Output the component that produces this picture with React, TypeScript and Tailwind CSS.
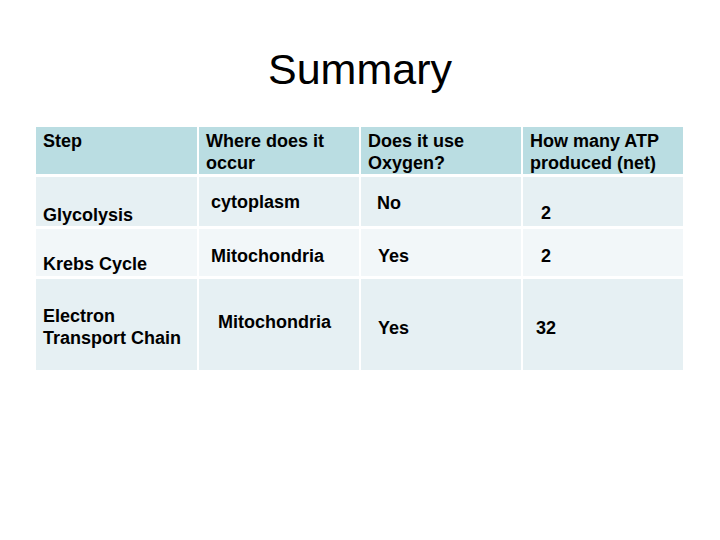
import React from 'react';

type Cell = { text: string[]; pt: string; pl: string };

const header: string[][] = [
  ['Step'],
  ['Where does it', 'occur'],
  ['Does it use', 'Oxygen?'],
  ['How many ATP', 'produced (net)'],
];

// each row: height, background, and cell offsets (text sits unevenly, as in the slide)
const rows: { h: string; bg: string; cells: Cell[] }[] = [
  {
    h: 'h-[49px]',
    bg: 'bg-[#e6f0f3]',
    cells: [
      { text: ['Glycolysis'], pt: 'pt-[27px]', pl: 'pl-[7px]' },
      { text: ['cytoplasm'], pt: 'pt-[14px]', pl: 'pl-[12px]' },
      { text: ['No'], pt: 'pt-[15px]', pl: 'pl-[16px]' },
      { text: ['2'], pt: 'pt-[25px]', pl: 'pl-[18px]' },
    ],
  },
  {
    h: 'h-[47px]',
    bg: 'bg-[#f2f7f9]',
    cells: [
      { text: ['Krebs Cycle'], pt: 'pt-[24px]', pl: 'pl-[7px]' },
      { text: ['Mitochondria'], pt: 'pt-[16px]', pl: 'pl-[12px]' },
      { text: ['Yes'], pt: 'pt-[16px]', pl: 'pl-[17px]' },
      { text: ['2'], pt: 'pt-[16px]', pl: 'pl-[18px]' },
    ],
  },
  {
    h: 'h-[91px]',
    bg: 'bg-[#e6f0f3]',
    cells: [
      { text: ['Electron', 'Transport Chain'], pt: 'pt-[26px]', pl: 'pl-[7px]' },
      { text: ['Mitochondria'], pt: 'pt-[32px]', pl: 'pl-[19px]' },
      { text: ['Yes'], pt: 'pt-[38px]', pl: 'pl-[17px]' },
      { text: ['32'], pt: 'pt-[38px]', pl: 'pl-[13px]' },
    ],
  },
];

export default function App() {
  return (
    <div className="h-[540px] w-[720px] bg-white font-['Liberation_Sans',Arial,sans-serif] text-black">
      <h1 className="pt-[45px] text-center text-[43px] leading-[48px] font-normal">Summary</h1>

      <div className="mt-[34px] ml-[36px] grid w-[647px] grid-cols-[161px_160px_160px_160px] gap-x-[2px] gap-y-[3px] text-[18px] leading-[22px] font-bold">
        {header.map((lines, i) => (
          <div key={i} className="h-[47px] bg-[#badde2] pt-[3px] pl-[7px]">
            {lines.map((l) => (
              <div key={l}>{l}</div>
            ))}
          </div>
        ))}

        {rows.map((row, r) =>
          row.cells.map((cell, c) => (
            <div key={`${r}-${c}`} className={`${row.h} ${row.bg} ${cell.pt} ${cell.pl}`}>
              {cell.text.map((l) => (
                <div key={l}>{l}</div>
              ))}
            </div>
          ))
        )}
      </div>
    </div>
  );
}
